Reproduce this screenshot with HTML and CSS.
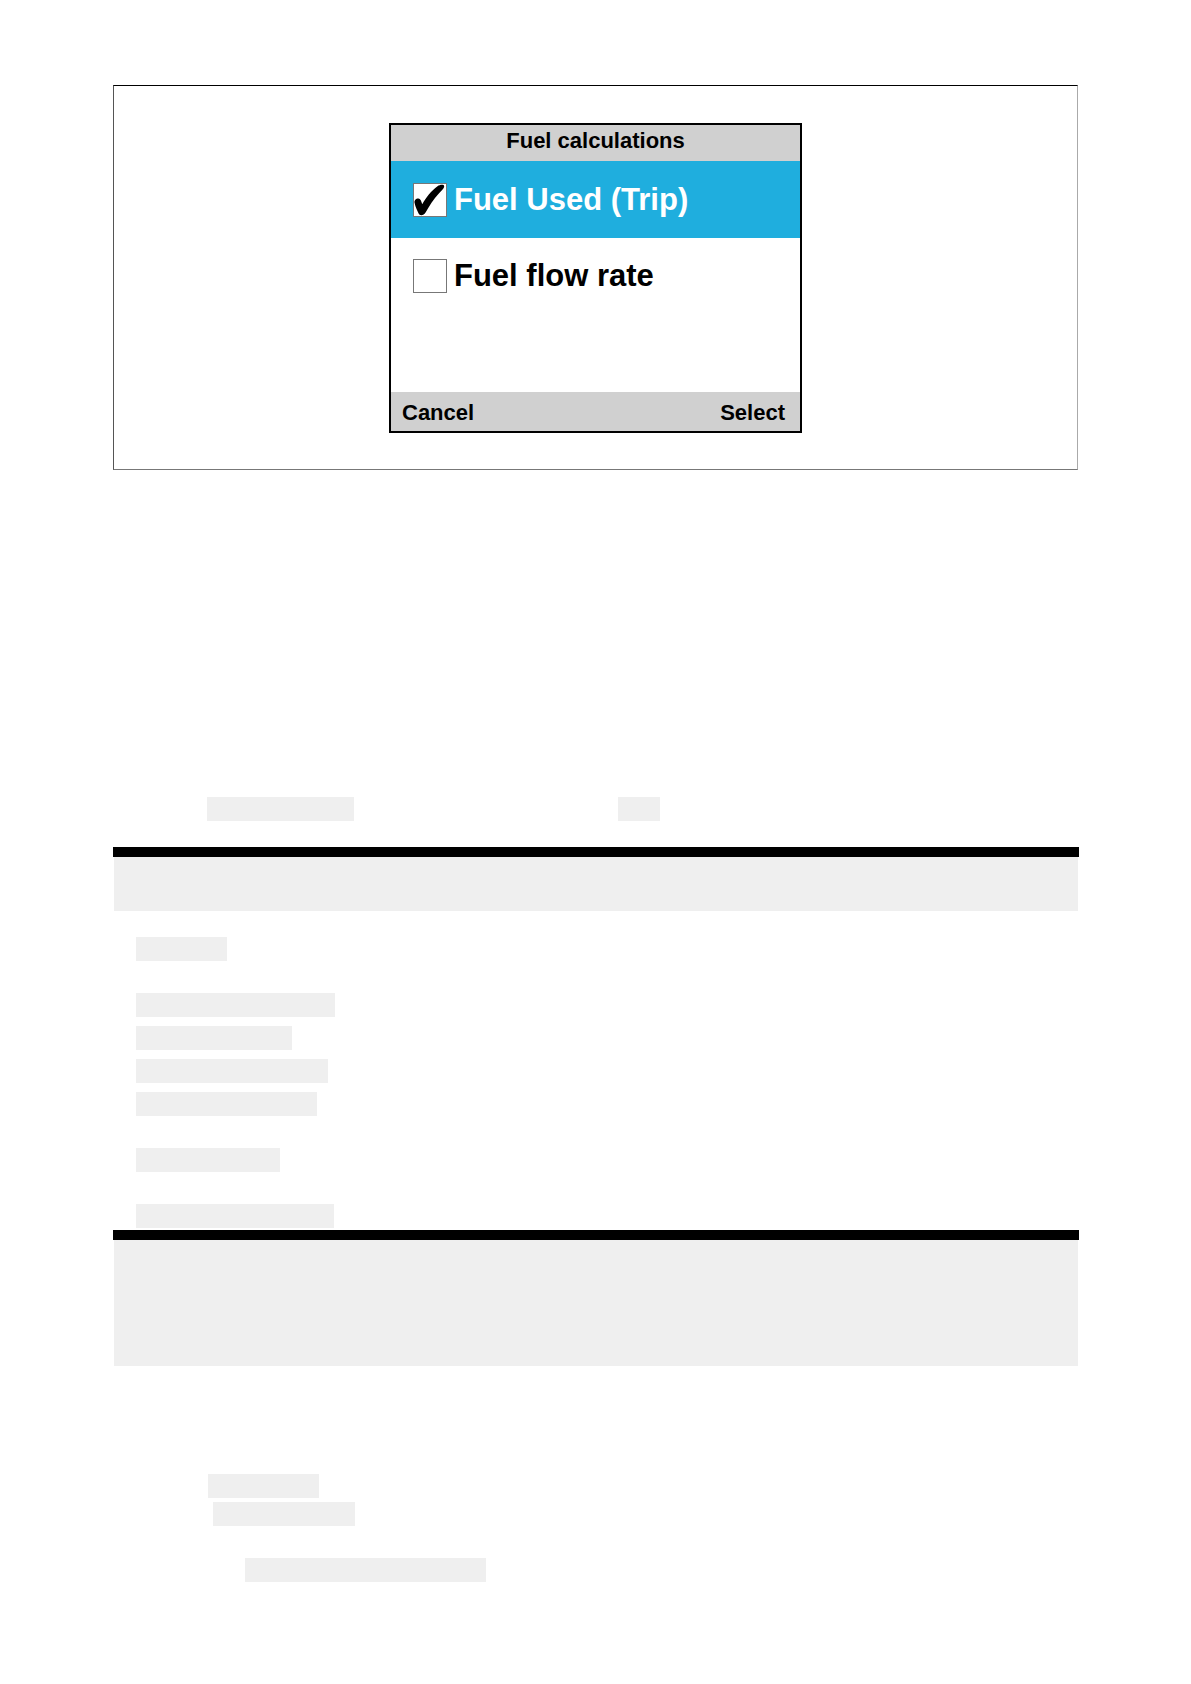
FILE: index.html
```html
<!DOCTYPE html>
<html lang="en">
<head>
    <meta charset="UTF-8">
    <meta name="viewport" content="width=device-width, initial-scale=1.0">
    <title>Fuel calculations</title>
    <link rel="stylesheet" href="styles.css">
</head>
<body>
    <main class="page">
        <div class="figure">
            <form class="device">
                <h1 class="device-title">Fuel calculations</h1>
                <div class="options">
                    <label class="option selected">
                        <span class="tick-box">
                            <input type="checkbox" checked>
                            <svg class="tick" viewBox="0 0 34 34" aria-hidden="true">
                                <path d="M1.6 20C1 17.5 3 15.5 5.4 15.6C7.6 15.8 8.2 18 9.2 21.2C13 14.5 18.5 7.5 24.5 3.2C27 1.4 31 1 31.2 3.2C31.2 5.4 28.5 7.5 26.3 10C20.5 16.2 16 23.5 12.4 29.8C11 32.5 6.8 33.2 5.6 30.6C4.4 27.5 2.4 24 1.6 20Z"/>
                            </svg>
                        </span>
                        <span>Fuel Used (Trip)</span>
                    </label>
                    <label class="option">
                        <span class="tick-box">
                            <input type="checkbox">
                        </span>
                        <span>Fuel flow rate</span>
                    </label>
                </div>
                <div class="softkeys">
                    <button type="button">Cancel</button>
                    <button type="button">Select</button>
                </div>
            </form>
        </div>

        <div class="inline-chips">
            <span class="chip trip-menu"></span>
            <span class="chip short"></span>
        </div>

        <div class="note"></div>

        <ul class="chip-list">
            <li class="chip item-1"></li>
            <li class="chip item-2"></li>
            <li class="chip item-3"></li>
            <li class="chip item-4"></li>
            <li class="chip item-5"></li>
            <li class="chip item-6"></li>
            <li class="chip item-7"></li>
        </ul>

        <div class="note note-large"></div>

        <div class="steps">
            <span class="chip step-1"></span>
            <span class="chip step-2"></span>
            <span class="chip step-3"></span>
        </div>
    </main>
</body>
</html>
```
FILE: styles.css
```css
* {
    box-sizing: border-box;
}

body {
    margin: 0;
    background-color: #fff;
    color: #000;
    font-family: "Liberation Sans", Arial, sans-serif;
}

.page {
    padding: 85px 112px 100px 113px;
}

/* Framed figure with the instrument screen */
.figure {
    display: flex;
    justify-content: center;
    padding: 37px 20px 36px;
    margin-right: 1px;
    border: 1px solid #000;
    border-right-color: #aaa;
    border-bottom-color: #777;
    border-left-color: #555;
}

.device {
    display: flex;
    flex-direction: column;
    width: 413px;
    min-height: 310px;
    border: 2px solid #000;
    background-color: #fff;
    font-weight: bold;
}

.device-title {
    margin: 0;
    padding-bottom: 4px;
    background-color: #d0d0d0;
    font-size: 22px;
    line-height: 32px;
    text-align: center;
}

.options {
    flex-grow: 1;
}

.option {
    display: flex;
    align-items: center;
    gap: 7px;
    height: 75px;
    padding-left: 22px;
    font-size: 31px;
    white-space: nowrap;
}

.option.selected {
    height: 77px;
    background-color: #1faede;
    color: #fff;
}

.tick-box {
    position: relative;
    width: 34px;
    height: 34px;
}

.tick-box input {
    display: block;
    width: 34px;
    height: 34px;
    margin: 0;
    appearance: none;
    border: 1px solid #777;
    background-color: #fff;
}

.tick {
    position: absolute;
    top: 0;
    left: 0;
    width: 34px;
    height: 34px;
    pointer-events: none;
}

.softkeys {
    display: flex;
    justify-content: space-between;
    height: 39px;
    padding: 2px 15px 0 11px;
    background-color: #d0d0d0;
}

.softkeys button {
    padding: 0;
    border: none;
    background: none;
    color: #000;
    font: bold 22px "Liberation Sans", Arial, sans-serif;
}

/* Highlight blocks */
.chip {
    display: block;
    height: 24px;
    background-color: #efefef;
}

.inline-chips {
    display: flex;
    gap: 264px;
    margin: 327px 0 26px;
    padding-left: 94px;
}

.trip-menu { width: 147px; }
.short { width: 42px; }

.note {
    height: 64px;
    margin: 0;
    padding: 0 1px;
    border-top: 10px solid #000;
    background-color: #efefef;
    background-clip: content-box;
}

.note-large {
    height: 136px;
}

.chip-list {
    display: flex;
    flex-direction: column;
    gap: 9px;
    margin: 26px 0 2px;
    padding: 0 0 0 23px;
    list-style: none;
}

.item-1 { width: 91px; margin-bottom: 23px; }
.item-2 { width: 199px; }
.item-3 { width: 156px; }
.item-4 { width: 192px; }
.item-5 { width: 181px; margin-bottom: 23px; }
.item-6 { width: 144px; margin-bottom: 23px; }
.item-7 { width: 198px; }

.steps {
    display: flex;
    flex-direction: column;
    gap: 4px;
    margin-top: 108px;
    padding-left: 95px;
}

.step-1 { width: 111px; }
.step-2 { width: 142px; margin-left: 5px; }
.step-3 { width: 241px; margin: 28px 0 0 37px; }
```
